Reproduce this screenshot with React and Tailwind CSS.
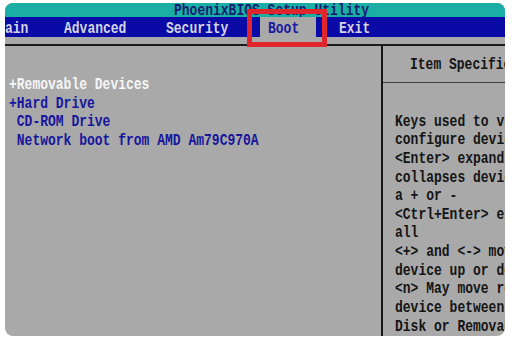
import React from "react";

const mono = { fontFamily: '"Liberation Mono", "DejaVu Sans Mono", monospace' };

function Line({ children, className = "" }) {
  return (
    <div className={"h-[18.64px] leading-[18.64px] whitespace-pre scale-y-[1.2] origin-center " + className}>
      {children}
    </div>
  );
}

export default function App() {
  const help = [
    "Keys used to view or",
    "configure devices.",
    "<Enter> expands or",
    "collapses devices with",
    "a + or -",
    "<Ctrl+Enter> expands",
    "all",
    "<+> and <-> moves the",
    "device up or down.",
    "<n> May move removable",
    "device between Hard",
    "Disk or Removable",
  ];
  return (
    <div className="w-[512px] h-[339px] bg-white pt-[3px] pl-[5px]">
      <div
        className="relative w-[500px] h-[333px] rounded-[8px] overflow-hidden bg-[#a9a9a9] flex flex-col text-[13px] font-bold"
        style={mono}
      >
        {/* Title bar */}
        <div className="h-[14px] bg-[#1aaea5] overflow-hidden pl-[169px] shrink-0">
          <div className="h-[14px] leading-[14px] whitespace-pre text-[#141c70] scale-y-[1.2] translate-y-[1px]">
            PhoenixBIOS Setup Utility
          </div>
        </div>
        {/* Menu bar */}
        <div className="h-[20px] bg-[#0a0aa6] flex items-stretch text-[#d4d4e4] shrink-0">
          <div className="w-[59px] flex items-center pt-[3px]"><span className="scale-y-[1.2]">ain</span></div>
          <div className="w-[102px] flex items-center pt-[3px]"><span className="scale-y-[1.2]">Advanced</span></div>
          <div className="w-[94px] flex items-center pt-[3px]"><span className="scale-y-[1.2]">Security</span></div>
          <div className="w-[56px] flex items-center bg-[#a9a9a9] pl-[8px] pt-[3px] text-[#1a1aa0]"><span className="scale-y-[1.2]">Boot</span></div>
          <div className="pl-[23px] flex items-center pt-[3px]"><span className="scale-y-[1.2]">Exit</span></div>
        </div>
        <div className="h-[7px] shrink-0" />
        <div className="h-[2px] bg-[#1c1c1c] shrink-0" />
        {/* Body */}
        <div className="flex flex-1 min-h-0">
          <div className="w-[376px] pt-[30px] pl-[4px]">
            <Line className="text-[#f6f6f6]">+Removable Devices</Line>
            <Line className="text-[#16169c]">+Hard Drive</Line>
            <Line className="text-[#16169c]"> CD-ROM Drive</Line>
            <Line className="text-[#16169c]"> Network boot from AMD Am79C970A</Line>
          </div>
          <div className="w-[2px] bg-[#161616]" />
          <div className="flex-1 min-w-0 overflow-hidden text-[#141414]">
            <div className="pt-[10px] pl-[27px]">
              <Line>Item Specific Help</Line>
            </div>
            <div className="mt-[7px] h-[1px] bg-[#3c3c3c]" />
            <div className="mt-[30px] pl-[12px]">
              {help.map((t, i) => (
                <Line key={i}>{t}</Line>
              ))}
            </div>
          </div>
        </div>
        {/* Red highlight annotation */}
        <div className="absolute left-[242px] top-[6px] w-[80px] h-[38px] border-[5px] border-[#e0262c]" />
      </div>
    </div>
  );
}
